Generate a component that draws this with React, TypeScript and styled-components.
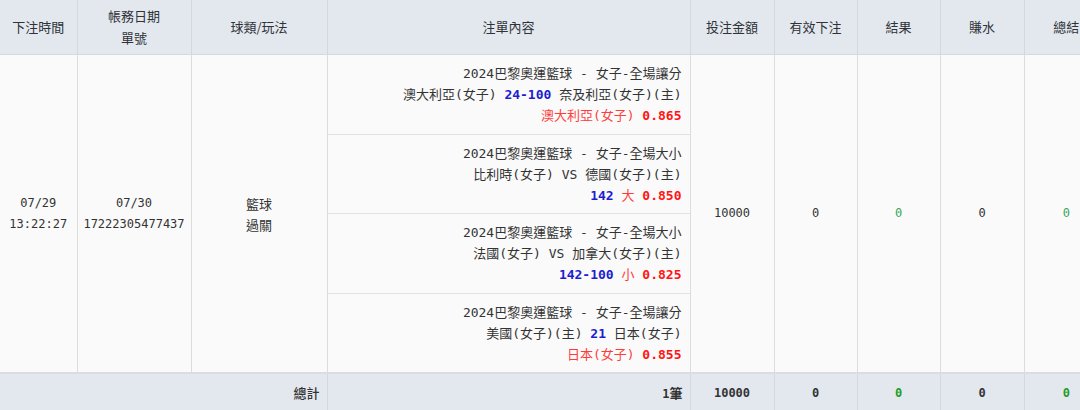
import React from "react";
import styled, { createGlobalStyle } from "styled-components";

const Global = createGlobalStyle`
  html, body { margin: 0; padding: 0; background: #fafafa; overflow: hidden; }
  body { font-family: "Noto Sans CJK TC", "Noto Sans", sans-serif; color: #333; text-autospace: no-autospace; }
`;

const Table = styled.table`
  border-collapse: collapse;
  table-layout: fixed;
  width: 1108px;
  background: #fafafa;
`;

const HeadCell = styled.th`
  background: #e3e8ef;
  height: 54px;
  padding: 0 4px;
  font-family: "Noto Sans CJK TC", "Noto Sans", sans-serif;
  font-size: 13px;
  font-weight: normal;
  color: #2f3338;
  line-height: 22px;
  text-align: center;
  vertical-align: middle;
  border-left: 1px solid #d3d8df;
  border-bottom: 1px solid #d6dae0;
  &:first-child { border-left: none; }
`;

const Cell = styled.td<{ $align?: "left" | "center" | "right" }>`
  padding: 0 4px;
  font-family: "DejaVu Sans Mono", "Noto Sans CJK TC", monospace;
  font-size: 12px;
  line-height: 21px;
  color: #333;
  text-align: ${(p) => p.$align ?? "center"};
  vertical-align: middle;
  border-left: 1px solid #dcdcdc;
  &:first-child { border-left: none; }
`;

const SansCell = styled(Cell)`
  font-family: "Noto Sans CJK TC", sans-serif;
  font-size: 13px;
`;

const ContentCell = styled.td`
  padding: 0;
  vertical-align: top;
  border-left: 1px solid #dcdcdc;
`;

const Bet = styled.div`
  padding: 8px 8px 7.5px 6px;
  text-align: right;
  font-family: "DejaVu Sans Mono", "Noto Sans CJK TC", monospace;
  font-size: 13px;
  line-height: 21px;
  color: #333;
  white-space: nowrap;
  text-autospace: no-autospace;
  border-bottom: 1px solid #e2e2e2;
  &:last-child { border-bottom: none; }
`;

const Line = styled.div``;

const Blue = styled.b`
  color: #1d1dd0;
  font-weight: bold;
`;

const RedName = styled.span`
  color: #ff3c3c;
`;

const RedOdds = styled.b`
  color: #ff1414;
  font-weight: bold;
`;

const Green = styled.span<{ $bold?: boolean }>`
  color: ${(p) => (p.$bold ? "#1f9d1f" : "#3aa55a")};
  font-weight: ${(p) => (p.$bold ? "bold" : "normal")};
`;

const FootCell = styled.td<{ $align?: "center" | "right" }>`
  background: #e3e8ef;
  height: 37px;
  padding: 0 7px;
  font-family: "DejaVu Sans Mono", "Noto Sans CJK TC", monospace;
  font-size: 12px;
  font-weight: bold;
  color: #333;
  text-align: ${(p) => p.$align ?? "center"};
  vertical-align: middle;
  border-left: 1px solid #d3d8df;
  border-top: 2px solid #d9dde3;
  &:first-child { border-left: none; }
`;

const FootLabel = styled.span`
  font-family: "Noto Sans CJK TC", sans-serif;
  font-size: 13px;
  font-weight: 500;
`;

const FootCount = styled.span`
  font-family: "Noto Sans CJK TC", sans-serif;
  font-size: 13px;
  font-weight: bold;
`;

type BetData = {
  title: string;
  match: React.ReactNode;
  pick: React.ReactNode;
};

const bets: BetData[] = [
  {
    title: "2024巴黎奧運籃球 - 女子-全場讓分",
    match: (
      <>
        澳大利亞(女子) <Blue>24-100</Blue> 奈及利亞(女子)(主)
      </>
    ),
    pick: (
      <>
        <RedName>澳大利亞(女子)</RedName> <RedOdds>0.865</RedOdds>
      </>
    ),
  },
  {
    title: "2024巴黎奧運籃球 - 女子-全場大小",
    match: <>比利時(女子) VS 德國(女子)(主)</>,
    pick: (
      <>
        <Blue>142</Blue> <RedName>大</RedName> <RedOdds>0.850</RedOdds>
      </>
    ),
  },
  {
    title: "2024巴黎奧運籃球 - 女子-全場大小",
    match: <>法國(女子) VS 加拿大(女子)(主)</>,
    pick: (
      <>
        <Blue>142-100</Blue> <RedName>小</RedName> <RedOdds>0.825</RedOdds>
      </>
    ),
  },
  {
    title: "2024巴黎奧運籃球 - 女子-全場讓分",
    match: (
      <>
        美國(女子)(主) <Blue>21</Blue> 日本(女子)
      </>
    ),
    pick: (
      <>
        <RedName>日本(女子)</RedName> <RedOdds>0.855</RedOdds>
      </>
    ),
  },
];

const widths = [77, 114, 136, 363, 84, 83, 83, 84, 84];

export default function App() {
  return (
    <>
      <Global />
      <Table>
        <colgroup>
          {widths.map((w, i) => (
            <col key={i} style={{ width: w }} />
          ))}
        </colgroup>
        <thead>
          <tr>
            <HeadCell>下注時間</HeadCell>
            <HeadCell>
              帳務日期
              <br />
              單號
            </HeadCell>
            <HeadCell>球類/玩法</HeadCell>
            <HeadCell>注單內容</HeadCell>
            <HeadCell>投注金額</HeadCell>
            <HeadCell>有效下注</HeadCell>
            <HeadCell>結果</HeadCell>
            <HeadCell>賺水</HeadCell>
            <HeadCell>總結</HeadCell>
          </tr>
        </thead>
        <tbody>
          <tr>
            <Cell>
              07/29
              <br />
              13:22:27
            </Cell>
            <Cell>
              07/30
              <br />
              17222305477437
            </Cell>
            <SansCell>
              籃球
              <br />
              過關
            </SansCell>
            <ContentCell>
              {bets.map((b, i) => (
                <Bet key={i}>
                  <Line>{b.title}</Line>
                  <Line>{b.match}</Line>
                  <Line>{b.pick}</Line>
                </Bet>
              ))}
            </ContentCell>
            <Cell>10000</Cell>
            <Cell>0</Cell>
            <Cell>
              <Green>0</Green>
            </Cell>
            <Cell>0</Cell>
            <Cell>
              <Green>0</Green>
            </Cell>
          </tr>
        </tbody>
        <tfoot>
          <tr>
            <FootCell colSpan={3} $align="right">
              <FootLabel>總計</FootLabel>
            </FootCell>
            <FootCell $align="right">
              1<FootCount>筆</FootCount>
            </FootCell>
            <FootCell>10000</FootCell>
            <FootCell>0</FootCell>
            <FootCell>
              <Green $bold>0</Green>
            </FootCell>
            <FootCell>0</FootCell>
            <FootCell>
              <Green $bold>0</Green>
            </FootCell>
          </tr>
        </tfoot>
      </Table>
    </>
  );
}
